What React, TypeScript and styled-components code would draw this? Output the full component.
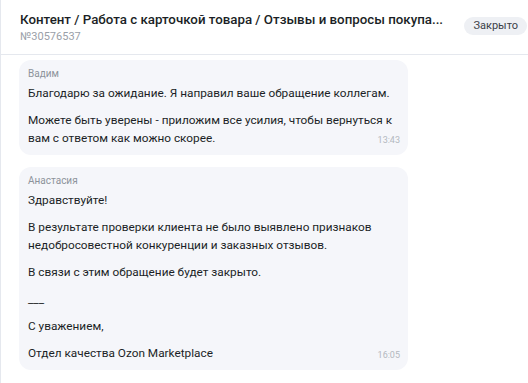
import React from "react";
import styled, { createGlobalStyle } from "styled-components";

const GlobalStyle = createGlobalStyle`
  html, body {
    margin: 0;
    padding: 0;
    background: #ffffff;
    font-family: Roboto, "Noto Sans", sans-serif;
    color: #1b1f26;
  }
`;

// Page
const Page = styled.div`
  height: 383px;
  overflow: hidden;
  border-left: 1px solid #e5e8ee;
  box-sizing: border-box;
`;

// Header
const Header = styled.div`
  display: flex;
  align-items: flex-start;
  justify-content: space-between;
  height: 55px;
  box-sizing: border-box;
  padding: 10px 1px 0 19px;
  border-bottom: 1px solid #e5e8ee;
`;
const TitleBlock = styled.div`
  display: flex;
  flex-direction: column;
  min-width: 0;
`;
const Title = styled.div`
  font-size: 13.3px;
  font-weight: 500;
  line-height: 20px;
  white-space: nowrap;
  color: #1b1f26;
`;
const Number = styled.div`
  font-size: 11px;
  line-height: 14px;
  color: #9aa0a8;
`;
const Badge = styled.div`
  flex-shrink: 0;
  margin-top: 7px;
  padding: 0 9px;
  height: 18px;
  line-height: 18px;
  border-radius: 9px;
  background: #eef0f4;
  font-size: 11px;
  color: #3b4048;
`;

// Chat
const Chat = styled.div`
  position: relative;
  display: flex;
  flex-direction: column;
  gap: 12px;
  padding: 5px 0 0 18px;
`;
const DateChip = styled.div`
  position: absolute;
  top: 7px;
  left: 50%;
  transform: translateX(-50%);
  height: 17px;
  line-height: 15px;
  box-sizing: border-box;
  padding: 0 11px;
  border: 1px solid #e5e8ee;
  border-radius: 9px;
  background: #ffffff;
  font-size: 11px;
  color: #5d636b;
`;
const Bubble = styled.div`
  position: relative;
  width: 389px;
  box-sizing: border-box;
  padding: 7px 8px 8px 9px;
  border-radius: 12px;
  background: #f5f6fa;
`;
const Author = styled.div`
  font-size: 10px;
  line-height: 14px;
  color: #8d939b;
  margin-bottom: 3px;
`;
const Text = styled.p`
  margin: 0 0 9px;
  font-size: 11.8px;
  line-height: 18px;
  color: #1b1f26;
  &:last-of-type {
    margin-bottom: 0;
  }
`;
const Time = styled.span`
  position: absolute;
  right: 8px;
  bottom: 9px;
  font-size: 9px;
  line-height: 11px;
  color: #b3b8bf;
`;

type Message = {
  author: string;
  lines: string[];
  time: string;
};

const messages: Message[] = [
  {
    author: "Вадим",
    lines: [
      "Благодарю за ожидание. Я направил ваше обращение коллегам.",
      "Можете быть уверены - приложим все усилия, чтобы вернуться к вам с ответом как можно скорее."
    ],
    time: "13:43"
  },
  {
    author: "Анастасия",
    lines: [
      "Здравствуйте!",
      "В результате проверки клиента не было выявлено признаков недобросовестной конкуренции и заказных отзывов.",
      "В связи с этим обращение будет закрыто.",
      "___",
      "С уважением,",
      "Отдел качества Ozon Marketplace"
    ],
    time: "16:05"
  }
];

const App = () => {
  return (
    <Page>
      <GlobalStyle />
      <Header>
        <TitleBlock>
          <Title>Контент / Работа с карточкой товара / Отзывы и вопросы покупа...</Title>
          <Number>№30576537</Number>
        </TitleBlock>
        <Badge>Закрыто</Badge>
      </Header>

      <Chat>
        <DateChip>24 октября</DateChip>
        {messages.map((msg) => (
          <Bubble key={msg.time}>
            <Author>{msg.author}</Author>
            {msg.lines.map((line, i) => (
              <Text key={i}>{line}</Text>
            ))}
            <Time>{msg.time}</Time>
          </Bubble>
        ))}
      </Chat>
    </Page>
  );
};

export default App;
